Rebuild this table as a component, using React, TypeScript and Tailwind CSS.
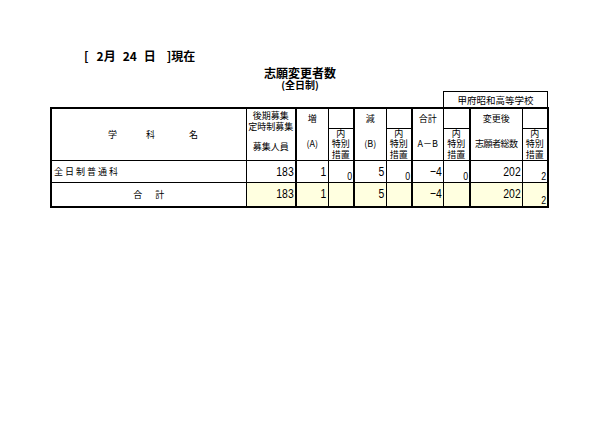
const JP = "font-['Noto_Sans_CJK_JP',sans-serif]";
const NUM = "font-['Liberation_Sans',sans-serif]";

const COLS = [195, 50, 32, 26, 32, 26, 31, 27, 52, 26];

const HL = 'bg-[#ffffe0]';

function Sub() {
  return (
    <div className="flex flex-col items-center text-[9px] leading-[10.5px]">
      <span>内</span>
      <span>特別</span>
      <span>措置</span>
    </div>
  );
}

function Row({ label, cells, total }: { label: React.ReactNode; cells: (string | null)[]; total?: boolean }) {
  const bg = total ? HL : '';
  return (
    <tr className={total ? 'h-[24px]' : 'h-[22px]'}>
      <td className={`border border-black p-0 ${JP} text-[9px]`}>{label}</td>
      {cells.map((v, i) => {
        const small = i >= 1 && i % 2 === 0;
        const thick = i === 0 || i === 2 || i === 4 || i === 6;
        return (
          <td
            key={i}
            className={`border border-black p-0 pr-[1px] text-right ${bg} ${thick ? 'border-r-2' : ''} ${NUM} ${
              small ? 'align-bottom text-[11px] leading-[11px]' : 'text-[13px] leading-[14px]'
            }`}
          >
            {v && <span className="inline-block origin-right scale-x-[0.8]">{v}</span>}
          </td>
        );
      })}
    </tr>
  );
}

export default function App() {
  return (
    <div className={`h-[424px] w-[600px] bg-white pt-[48px] text-black ${JP}`}>
      <div className="flex h-[16px] items-center pl-[84px] text-[12px] font-bold leading-[16px]">
        <span>[</span>
        <span className="ml-[8px]">2月</span>
        <span className="ml-[7px]">24</span>
        <span className="ml-[7px]">日</span>
        <span className="ml-[11px]">]現在</span>
      </div>
      <div className="mt-[3px] h-[12px] text-center text-[12px] font-bold leading-[12px]">志願変更者数</div>
      <div className="h-[11px] text-center text-[10px] font-bold leading-[11px]">(全日制)</div>
      <div className="mt-[1px] flex justify-end pr-[52px]">
        <div className="flex h-[16px] w-[105px] items-center justify-center border border-b-0 border-black text-[9.5px] leading-[12px]">
          甲府昭和高等学校
        </div>
      </div>
      <table className="ml-[50px] w-[499px] table-fixed border-collapse border-2 border-black">
        <colgroup>
          {COLS.map((w, i) => (
            <col key={i} style={{ width: w }} />
          ))}
        </colgroup>
        <tbody>
          <tr className="h-[20px]">
            <td rowSpan={2} className="border border-black p-0 text-[9px]">
              <div className="flex pl-[56px]">
                <span>学</span>
                <span className="ml-[29px]">科</span>
                <span className="ml-[34px]">名</span>
              </div>
            </td>
            <td rowSpan={2} className="border border-black border-r-2 p-0 align-top text-center text-[9px] leading-[11px]">
              <div className="pt-[1px]">後期募集</div>
              <div>定時制募集</div>
              <div className="mt-[9px]">募集人員</div>
            </td>
            <td className="border border-b-0 border-black p-0 text-center text-[9px]">増</td>
            <td className="border border-l-0 border-r-2 border-black p-0"></td>
            <td className="border border-b-0 border-black p-0 text-center text-[9px]">減</td>
            <td className="border border-l-0 border-r-2 border-black p-0"></td>
            <td className="border border-b-0 border-black p-0 text-center text-[9px]">合計</td>
            <td className="border border-l-0 border-r-2 border-black p-0"></td>
            <td className="border border-b-0 border-black p-0 text-center text-[9px]">変更後</td>
            <td className="border border-l-0 border-black p-0"></td>
          </tr>
          <tr className="h-[32px]">
            <td className="border border-t-0 border-black p-0 text-center text-[9px]">(A)</td>
            <td className="border border-r-2 border-black p-0"><Sub /></td>
            <td className="border border-t-0 border-black p-0 text-center text-[9px]">(B)</td>
            <td className="border border-r-2 border-black p-0"><Sub /></td>
            <td className="border border-t-0 border-black p-0 text-center text-[9px]">A－B</td>
            <td className="border border-r-2 border-black p-0"><Sub /></td>
            <td className="border border-t-0 border-black p-0 text-center text-[9px] tracking-[-0.5px]">志願者総数</td>
            <td className="border border-black p-0"><Sub /></td>
          </tr>
          <Row
            label={<span className="pl-[2px] tracking-[2px]">全日制普通科</span>}
            cells={['183', '1', '0', '5', '0', '−4', '0', '202', '2']}
          />
          <Row
            total
            label={
              <div className="flex justify-center">
                <span>合</span>
                <span className="ml-[13px]">計</span>
              </div>
            }
            cells={['183', '1', null, '5', null, '−4', null, '202', '2']}
          />
        </tbody>
      </table>
    </div>
  );
}
